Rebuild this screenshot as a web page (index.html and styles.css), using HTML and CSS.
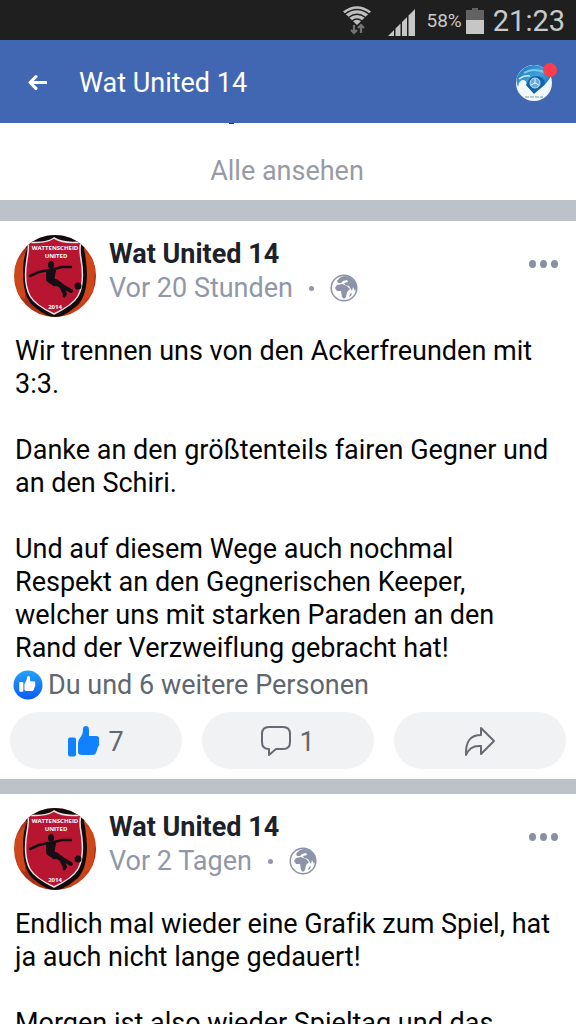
FILE: index.html
```html
<!DOCTYPE html>
<html lang="de">
<head>
<meta charset="utf-8">
<meta name="viewport" content="width=device-width, initial-scale=1">
<title>Wat United 14</title>
<link rel="stylesheet" href="styles.css">
</head>
<body>
<svg class="defs" aria-hidden="true">
  <defs>
    <clipPath id="round"><circle cx="41" cy="41" r="41"/></clipPath>
    <linearGradient id="ball" x2="1"><stop stop-color="#c54a20"/><stop offset=".15" stop-color="#a92d14"/><stop offset=".85" stop-color="#d34217"/><stop offset="1" stop-color="#a42a14"/></linearGradient>
    <linearGradient id="blue" x2="0" y2="1"><stop stop-color="#26a2fb"/><stop offset="1" stop-color="#0b5cf5"/></linearGradient>
    <linearGradient id="sky" x2="1" y2="1"><stop stop-color="#1e72b6"/><stop offset=".5" stop-color="#42a3dd"/><stop offset="1" stop-color="#0759a4"/></linearGradient>
  </defs>
  <symbol id="crest" viewBox="0 0 82 82">
    <g clip-path="url(#round)">
      <rect width="82" height="82" fill="url(#ball)"/>
      <path d="M0 30L11 18V64L4 60ZM82 24L71 18V64L79 60Z" fill="#cf461b"/>
      <path d="M9 6L41-4L73 6L70 14Q72 22 73 38Q73 60 64 70Q54 79 41 84Q28 79 18 70Q9 60 9 38Q9 22 13 14Z" fill="#120b0d"/>
      <path d="M14 7Q31 9 40 3Q50 9 67 7Q65 13 67 24Q71 48 64 61Q59 70 40 79Q21 70 16 61Q9 48 13 24Q15 13 14 7Z" fill="#b81630" stroke="#eee3e4" stroke-width="1.500"/>
      <g fill="#160e15" stroke="#160e15" stroke-linecap="round" stroke-linejoin="round">
        <ellipse cx="37" cy="30" rx="3" ry="4" stroke="none"/>
        <path d="M33 35L42 33L40 43L45 49L40 51L33 46Z"/>
        <path d="M34 35L25 37L16 41M40 34L48 32L57 32" fill="none" stroke-width="2.500"/>
        <path d="M36 46L47 51L51 59M42 46L50 52L57 56" fill="none" stroke-width="4"/>
        <path d="M51 59L50 61" fill="none" stroke-width="3"/>
        <circle cx="64" cy="51" r="3.500" stroke="none"/>
      </g>
    </g>
  </symbol>
  <symbol id="globe" viewBox="0 0 28 28">
    <circle cx="14" cy="14" r="12.800" fill="#fff" stroke="#8d94a8" stroke-width="1.500"/>
    <path d="M7 7Q10 2 16 2Q23 3 26 10Q27 15 25 17L23 13L22 17L19 12L15 11L14 9L18 8L17 6L13 7L11 9L8 9Z" fill="#8d94a8"/>
    <path d="M7 11L12 10L17 12L20 15L17 18L16 23L14 25L12 23L11 17L7 17L5 14ZM22 19L21 22L19 23L20 20Z" fill="#8d94a8"/>
  </symbol>
  <symbol id="thumb" viewBox="0 0 32 31">
    <rect y="11.500" width="8" height="19" rx="2"/>
    <path d="M12 12C14 9 15 7 15 3Q15 0 18 0Q21 0 21 4V10H28Q32 10 31 14L31 17Q32 19 30 21L28 27Q27 29 24 29H14Q10 29 10 26V17Q10 14 12 12Z"/>
  </symbol>
</svg>

<div class="status">
  <svg class="wifi" viewBox="0 0 28 29" aria-hidden="true">
    <path d="M0 5.500Q14-5 28 5.500L14 19Z" fill="#bfbfbf"/><path d="M2 8Q14-1 26 8M5.500 11.500Q14 5 22.500 11.500M9 15Q14 11 19 15" fill="none" stroke="#1f1f1f" stroke-width="1.300"/>
    <path d="M11 19V26M8 24L11 27L14 24M18 27V20M15 22L18 19L21 22" fill="none" stroke="#737373" stroke-width="2.200"/>
  </svg>
  <svg class="signal" viewBox="0 0 27 27" aria-hidden="true"><path d="M0 27L6 21V27ZM7.500 27V19.500L12.500 14.500V27ZM14 27V13L19 8V27ZM20.500 27V6.500L27 0V27Z" fill="#c6c6c6"/></svg>
  <span class="percent">58%</span>
  <svg class="battery" viewBox="0 0 18 26" aria-hidden="true"><path d="M6 0H12V2H18V12H0V2H6Z" fill="#626262"/><path d="M0 12H18V26H0Z" fill="#c6c6c6"/></svg>
  <span class="clock">21:23</span>
</div>

<header class="bar">
  <button class="back" type="button" aria-label="Zurück"><svg viewBox="0 0 18 14" aria-hidden="true"><path d="M7.500 1.500L2 7L7.500 12.500M2.500 7H17" fill="none" stroke="#fff" stroke-width="3" stroke-linecap="round" stroke-linejoin="round"/></svg></button>
  <h1>Wat United 14</h1>
  <button class="profile" type="button" aria-label="Profil">
    <svg viewBox="0 0 36 36" aria-hidden="true">
      <circle cx="18" cy="18" r="18" fill="#f2f8fa"/>
      <path d="M2 10Q8 0 18 0Q31 1 35 11Q31 20 18 28L11 21Q11 15 7 15Q3 15 2 22Q-1 15 2 10Z" fill="url(#sky)"/>
      <path d="M8 8Q18 2 30 8" fill="none" stroke="#7cc8ec" stroke-width="2"/>
      <path d="M3 14Q8 10 14 11" fill="none" stroke="#d2eef8" stroke-width="1.500"/>
      <path d="M10 20Q13 11 20 11Q28 11 29 19L18 29Z" fill="#1562ac"/>
      <circle cx="19" cy="18" r="5" fill="#6baad5" stroke="#c4dfef"/><path d="M19 18V14M19 18L15 20M19 18L23 20" stroke="#e8f6ff"/>
      <path d="M9 32H27" stroke="#719caf" stroke-dasharray="4 1"/>
    </svg>
    <span class="dot"></span>
  </button>
</header>

<main>
  <section class="more"><span class="sliver"></span><a href="#alle">Alle ansehen</a></section>

  <article class="post first">
    <div class="head">
      <svg class="avatar" viewBox="0 0 82 82" role="img" aria-label="Wattenscheid United"><use href="#crest"/><text x="41" y="15">WATTENSCHEID</text><text x="42" y="23">UNITED</text><text x="41" y="74">2014</text></svg>
      <div class="who"><h2>Wat United 14</h2><p class="meta">Vor 20 Stunden <i></i><svg class="globe" aria-hidden="true"><use href="#globe"/></svg></p></div>
      <button class="menu" type="button" aria-label="Mehr"><i></i><i></i><i></i></button>
    </div>
    <div class="copy">
      <p>Wir trennen uns von den Ackerfreunden mit 3:3.</p>
      <p>Danke an den größtenteils fairen Gegner und an den Schiri.</p>
      <p>Und auf diesem Wege auch nochmal Respekt an den Gegnerischen Keeper, welcher uns mit starken Paraden an den Rand der Verzweiflung gebracht hat!</p>
    </div>
    <div class="likes">
      <svg class="badge" viewBox="0 0 30 30" aria-hidden="true"><circle cx="15" cy="15" r="14.500" fill="url(#blue)"/><use href="#thumb" x="6" y="6" width="17" height="16" fill="#fff"/></svg>
      <span>Du und 6 weitere Personen</span>
    </div>
    <div class="actions">
      <button type="button" aria-label="Gefällt mir, 7"><svg class="like" aria-hidden="true"><use href="#thumb"/></svg><span>7</span></button>
      <button type="button" aria-label="Kommentare, 1"><svg class="comment" viewBox="0 0 30 31" aria-hidden="true"><path d="M8 1H22Q29 1 29 8V16Q29 23 22 23H15L8 29V23Q1 23 1 16V8Q1 1 8 1Z"/></svg><span>1</span></button>
      <button type="button" aria-label="Teilen"><svg class="share" viewBox="0 0 32 31" aria-hidden="true"><path d="M17 2L30 15L17 28V20Q6 19 2 29Q1 9 17 9Z"/></svg></button>
    </div>
  </article>

  <article class="post">
    <div class="head">
      <svg class="avatar" viewBox="0 0 82 82" role="img" aria-label="Wattenscheid United"><use href="#crest"/><text x="41" y="15">WATTENSCHEID</text><text x="42" y="23">UNITED</text><text x="41" y="74">2014</text></svg>
      <div class="who"><h2>Wat United 14</h2><p class="meta">Vor 2 Tagen <i></i><svg class="globe" aria-hidden="true"><use href="#globe"/></svg></p></div>
      <button class="menu" type="button" aria-label="Mehr"><i></i><i></i><i></i></button>
    </div>
    <div class="copy">
      <p>Endlich mal wieder eine Grafik zum Spiel, hat ja auch nicht lange gedauert!</p>
      <p>Morgen ist also wieder Spieltag und das</p>
    </div>
  </article>
</main>
</body>
</html>
```
FILE: styles.css
```css
* { box-sizing: border-box; }
html, body { height: 100%; }
body {
  margin: 0;
  display: flex;
  flex-direction: column;
  overflow: hidden;
  background: #fff;
  color: #050505;
  font-family: Roboto, "Liberation Sans", sans-serif;
  font-size: 27px;
  font-variant-ligatures: none;
}
h1, h2, p { margin: 0; font-size: 27px; }
button { border: 0; padding: 0; background: none; color: inherit; font: inherit; }
svg { display: block; flex: none; }
.defs { position: absolute; width: 0; height: 0; }

.status {
  flex: none;
  display: flex;
  align-items: center;
  justify-content: flex-end;
  height: 40px;
  padding: 1px 11px 0 0;
  background: #1f1f1f;
  color: #c9c9c9;
}
.wifi { width: 28px; height: 29px; margin-right: 17px; }
.signal { width: 27px; height: 27px; margin: 3px 12px 0 0; }
.percent { margin-right: 4px; font-size: 19px; }
.battery { width: 18px; height: 26px; margin-right: 9px; }
.clock { font-size: 29px; }

.bar {
  flex: none;
  display: flex;
  align-items: center;
  height: 83px;
  padding: 2px 24px 0 28px;
  background: #4267b2;
  color: #fff;
}
.bar h1 { flex: 1; font-weight: 400; }
.back { width: 51px; }
.back svg { width: 19px; height: 15px; }
.profile { position: relative; }
.profile svg { width: 36px; height: 36px; }
.dot { position: absolute; top: -2px; right: -5px; width: 14px; height: 14px; border-radius: 50%; background: #fa3e4d; }

main { flex: 1; min-height: 0; overflow: hidden; }
.more {
  position: relative;
  display: flex;
  justify-content: center;
  padding: 32px 2px 13px 0;
  line-height: 32px;
}
.more a { color: #979ba3; text-decoration: none; }
.sliver { position: absolute; top: 0; left: 40%; width: 5px; height: 1px; margin-left: -1px; background: #26334d; }

.post { border-top: 15px solid #bdc1c9; padding: 14px 10px 10px; }
.first { border-top-width: 21px; }
.head { display: flex; padding: 0 8px 0 4px; }
.avatar { width: 82px; height: 82px; margin-right: 13px; }
.avatar text { fill: #fff; font: bold 6px "Open Sans", sans-serif; text-anchor: middle; }
.who { flex: 1; padding-top: 2px; line-height: 34px; }
.who h2 { color: #1d2129; font-weight: 700; }
.meta { display: flex; align-items: center; color: #9197a8; }
.meta i { width: 5px; height: 5px; margin: 0 16px; border-radius: 50%; background: #9197a8; }
.globe { width: 28px; height: 28px; }
.menu { display: flex; align-self: flex-start; gap: 4px; padding-top: 25px; }
.menu i { width: 7px; height: 8px; border-radius: 50%; background: #8990a4; }

.copy { padding: 18px 12px 0 5px; line-height: 33px; }
.copy p + p { margin-top: 33px; }
.likes { display: flex; align-items: center; gap: 5px; height: 40px; padding-left: 3px; color: #616770; }
.badge { width: 30px; height: 30px; }
.actions { display: grid; grid-template-columns: repeat(3, 1fr); gap: 20px; padding-top: 7px; }
.actions button {
  display: flex;
  align-items: center;
  justify-content: center;
  gap: 8px;
  height: 57px;
  padding-top: 2px;
  border-radius: 29px;
  background: #f1f2f4;
  color: #616770;
}
.like { width: 32px; height: 31px; fill: #1182ff; }
.comment { width: 30px; height: 31px; }
.share { width: 32px; height: 31px; }
.comment, .share { fill: none; stroke: #656b75; stroke-width: 2; stroke-linejoin: round; }
```
